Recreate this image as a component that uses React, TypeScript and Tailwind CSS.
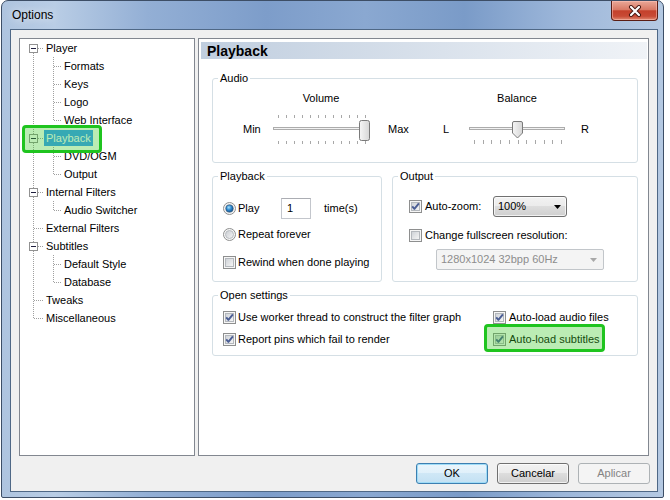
import React from "react";

type TreeItem = {
  label: string;
  level: 0 | 1;
  box?: boolean;
  last?: boolean;
  selected?: boolean;
};

const TREE: TreeItem[] = [
  { label: "Player", level: 0, box: true },
  { label: "Formats", level: 1 },
  { label: "Keys", level: 1 },
  { label: "Logo", level: 1 },
  { label: "Web Interface", level: 1, last: true },
  { label: "Playback", level: 0, box: true, selected: true },
  { label: "DVD/OGM", level: 1 },
  { label: "Output", level: 1, last: true },
  { label: "Internal Filters", level: 0, box: true },
  { label: "Audio Switcher", level: 1, last: true },
  { label: "External Filters", level: 0 },
  { label: "Subtitles", level: 0, box: true },
  { label: "Default Style", level: 1 },
  { label: "Database", level: 1, last: true },
  { label: "Tweaks", level: 0 },
  { label: "Miscellaneous", level: 0 },
];

const dot = {
  stroke: "#a0a0a0",
  strokeWidth: 1,
  strokeDasharray: "1 1",
  shapeRendering: "crispEdges" as const,
};

function TreeLines({ item, index }: { item: TreeItem; index: number }) {
  const first = index === 0;
  const lastTop = index === TREE.length - 1;
  if (item.level === 1) {
    return (
      <svg width="42" height="18" className="shrink-0">
        <line x1="13.5" y1="0" x2="13.5" y2="18" {...dot} />
        <line x1="33.5" y1="0" x2="33.5" y2={item.last ? 10 : 18} {...dot} />
        <line x1="34" y1="9.5" x2="42" y2="9.5" {...dot} />
      </svg>
    );
  }
  return (
    <svg width="24" height="18" className="shrink-0">
      {item.box ? (
        <>
          {!first && <line x1="13.5" y1="0" x2="13.5" y2="5" {...dot} />}
          {!lastTop && <line x1="13.5" y1="14" x2="13.5" y2="18" {...dot} />}
          <rect x="9.5" y="5.5" width="8" height="8" fill="#fff" stroke="#919191" shapeRendering="crispEdges" />
          <line x1="11" y1="9.5" x2="16" y2="9.5" stroke="#1f1f3f" shapeRendering="crispEdges" />
          <line x1="18" y1="9.5" x2="24" y2="9.5" {...dot} />
        </>
      ) : (
        <>
          <line x1="13.5" y1="0" x2="13.5" y2={lastTop ? 10 : 18} {...dot} />
          <line x1="14" y1="9.5" x2="24" y2="9.5" {...dot} />
        </>
      )}
    </svg>
  );
}

const CheckBox = ({ checked }: { checked?: boolean }) => (
  <svg width="13" height="13" className="shrink-0">
    <defs>
      <linearGradient id="cbIn" x1="0" y1="0" x2="1" y2="1">
        <stop offset="0" stopColor="#cdd1d6" />
        <stop offset="1" stopColor="#f7f7f7" />
      </linearGradient>
    </defs>
    <rect x="0.5" y="0.5" width="12" height="12" fill="#f6f6f6" stroke="#8e8f8f" shapeRendering="crispEdges" />
    <rect x="2.5" y="2.5" width="8" height="8" fill="url(#cbIn)" stroke="#b4b8bd" shapeRendering="crispEdges" />
    {checked && (
      <path d="M3.2 6.4 L5.4 8.9 L9.9 3.3" fill="none" stroke="#4a5d94" strokeWidth="1.9" strokeLinejoin="round" />
    )}
  </svg>
);

const Radio = ({ checked }: { checked?: boolean }) => (
  <svg width="13" height="13" className="shrink-0">
    <defs>
      <linearGradient id="rbIn" x1="0" y1="0" x2="1" y2="1">
        <stop offset="0" stopColor="#c9cdd2" />
        <stop offset="1" stopColor="#f5f5f5" />
      </linearGradient>
      <radialGradient id="rbDot" cx="0.4" cy="0.35" r="0.7">
        <stop offset="0" stopColor="#a6e0fb" />
        <stop offset="0.5" stopColor="#2f8ad0" />
        <stop offset="1" stopColor="#124f8c" />
      </radialGradient>
    </defs>
    <circle cx="6.5" cy="6.5" r="6" fill="#f6f6f6" stroke="#8e8f8f" />
    <circle cx="6.5" cy="6.5" r="4" fill="url(#rbIn)" stroke="#b8bcc1" />
    {checked && <circle cx="6.5" cy="6.5" r="3.6" fill="url(#rbDot)" stroke="#1a4f80" strokeWidth="0.6" />}
  </svg>
);

const Arrow = ({ color = "#000" }: { color?: string }) => (
  <svg width="7" height="4" className="shrink-0">
    <path d="M0 0 H7 L3.5 4 Z" fill={color} />
  </svg>
);

function VolumeSlider() {
  const ticks = Array.from({ length: 12 }, (_, i) => Math.round(7 + (i * 87) / 11));
  return (
    <svg width="100" height="32" className="shrink-0">
      <defs>
        <linearGradient id="vThumb" x1="0" y1="0" x2="1" y2="0">
          <stop offset="0" stopColor="#f6f6f6" />
          <stop offset="1" stopColor="#d6d6d6" />
        </linearGradient>
      </defs>
      {ticks.map((x) => (
        <g key={x}>
          <line x1={x + 0.5} y1="2" x2={x + 0.5} y2="5" stroke="#a8a8a8" shapeRendering="crispEdges" />
          <line x1={x + 0.5} y1="28" x2={x + 0.5} y2="31" stroke="#a8a8a8" shapeRendering="crispEdges" />
        </g>
      ))}
      <rect x="2.5" y="14.5" width="94" height="2" fill="#f2f2f2" stroke="#acacac" shapeRendering="crispEdges" />
      <rect x="88.5" y="7.5" width="10" height="20" rx="2" fill="url(#vThumb)" stroke="#7a7a7a" />
    </svg>
  );
}

function BalanceSlider() {
  const ticks = Array.from({ length: 11 }, (_, i) => Math.round(7 + i * 8.7));
  return (
    <svg width="100" height="32" className="shrink-0">
      <defs>
        <linearGradient id="bThumb" x1="0" y1="0" x2="1" y2="0">
          <stop offset="0" stopColor="#f6f6f6" />
          <stop offset="1" stopColor="#d6d6d6" />
        </linearGradient>
      </defs>
      {ticks.map((x) => (
        <line key={x} x1={x + 0.5} y1="27" x2={x + 0.5} y2="31" stroke="#a8a8a8" shapeRendering="crispEdges" />
      ))}
      <rect x="2.5" y="14.5" width="95" height="2" fill="#f2f2f2" stroke="#acacac" shapeRendering="crispEdges" />
      <path d="M45.5 10 Q45.5 8.5 47 8.5 H54 Q55.5 8.5 55.5 10 V20 L50.5 25 L45.5 20 Z" fill="url(#bThumb)" stroke="#7a7a7a" />
    </svg>
  );
}

const Group = ({ title, className, children }: { title: string; className: string; children: React.ReactNode }) => (
  <fieldset className={`min-w-0 rounded-[3px] border border-[#d5dfe5] ${className}`}>
    <legend className="ml-[5px] px-[2px] text-[11px] leading-[14px]">{title}</legend>
    {children}
  </fieldset>
);

const greenBox = "absolute rounded-[4px] border-[3px] border-[#1fc41f] bg-[rgba(60,200,40,0.35)]";

export default function App() {
  return (
    <div className="h-[500px] w-[670px] bg-white pl-[1px] font-['Liberation_Sans',Arial,sans-serif] text-[11px] text-black">
      <div className="relative flex h-[498px] w-[663px] flex-col rounded-t-[7px] rounded-b-[2px] border border-[#3d4e66] bg-[linear-gradient(90deg,#aec4df_0%,#b9cde5_8%,#93afd5_22%,#7d9dca_40%,#8aa8d1_55%,#7a9bc8_70%,#9db7da_85%,#b5c9e2_100%)] pl-[8px] pr-[5px] pb-[5px]">
        {/* title bar */}
        <div className="flex h-[28px] items-center pl-[2px] text-[12px] [text-shadow:0_0_8px_rgba(255,255,255,0.95)]">
          Options
        </div>
        <div className="absolute right-[5px] top-0 flex h-[20px] w-[47px] items-center justify-center rounded-b-[4px] border border-t-0 border-[#5a1d14] bg-[linear-gradient(180deg,#e9a898_0%,#d97a66_45%,#c4412c_52%,#c84a35_80%,#e08a72_100%)] shadow-[inset_0_0_0_1px_rgba(255,200,190,0.5)]">
          <svg width="14" height="12">
            <path d="M3 2 L11 10 M11 2 L3 10" stroke="#45150f" strokeWidth="4" strokeLinecap="round" />
            <path d="M3 2 L11 10 M11 2 L3 10" stroke="#fff" strokeWidth="2.2" strokeLinecap="round" />
          </svg>
        </div>

        {/* client area */}
        <div className="flex h-[463px] flex-col border border-[#4f6886] bg-[#f0f0f0] px-[8px] pt-[8px]">
          <div className="flex h-[418px] gap-[3px]">
            {/* tree */}
            <div className="relative h-[418px] w-[176px] shrink-0 border border-[#828790] bg-white">
              {TREE.map((item, i) => (
                <div key={item.label} className="flex h-[18px] items-center">
                  <TreeLines item={item} index={i} />
                  <span
                    className={`h-[16px] whitespace-nowrap px-[2px] leading-[16px] ${
                      item.selected ? "bg-[#3399ff] text-white" : ""
                    }`}
                  >
                    {item.label}
                  </span>
                </div>
              ))}
              <div className={`${greenBox} left-[2px] top-[86px] h-[28px] w-[80px]`} />
            </div>

            {/* page */}
            <div className="flex h-[418px] w-[451px] flex-col border border-[#828790] bg-white">
              <div className="ml-[2px] mr-[1px] mt-[3px] flex h-[17px] items-center bg-[linear-gradient(90deg,#c0cedf,#f0f3f7)] pl-[6px] text-[14px] font-bold leading-none">
                Playback
              </div>
              <div className="ml-[13px] mr-[10px] flex flex-col">
                <Group title="Audio" className="mt-[12px] h-[92px]">
                  <div className="flex pt-[6px]">
                    <div className="ml-[30px] flex w-[200px] flex-col">
                      <div className="ml-[28px] w-[100px] text-center leading-[14px]">Volume</div>
                      <div className="mt-[8px] flex h-[32px] items-center">
                        <span className="w-[28px]">Min</span>
                        <VolumeSlider />
                        <span className="ml-[17px]">Max</span>
                      </div>
                    </div>
                    <div className="flex flex-col">
                      <div className="ml-[24px] w-[100px] text-center leading-[14px]">Balance</div>
                      <div className="mt-[8px] flex h-[32px] items-center">
                        <span className="w-[24px]">L</span>
                        <BalanceSlider />
                        <span className="ml-[14px]">R</span>
                      </div>
                    </div>
                  </div>
                </Group>

                <div className="mt-[6px] flex gap-[10px]">
                  <Group title="Playback" className="h-[113px] w-[170px]">
                    <div className="ml-[10px] mt-[15px] flex h-[21px] items-center">
                      <Radio checked />
                      <span className="ml-[2px] w-[43px]">Play</span>
                      <div className="flex h-[21px] w-[30px] items-center border border-[#c3c6cc] border-t-[#abadb3] bg-white pl-[5px]">
                        1
                      </div>
                      <span className="ml-[13px]">time(s)</span>
                    </div>
                    <div className="ml-[10px] mt-[5px] flex h-[20px] items-center">
                      <Radio />
                      <span className="ml-[2px]">Repeat forever</span>
                    </div>
                    <div className="ml-[10px] mt-[8px] flex h-[20px] items-center">
                      <CheckBox />
                      <span className="ml-[2px]">Rewind when done playing</span>
                    </div>
                  </Group>

                  <Group title="Output" className="h-[113px] w-[246px]">
                    <div className="ml-[16px] mt-[13px] flex h-[21px] items-center">
                      <CheckBox checked />
                      <span className="ml-[3px] w-[68px]">Auto-zoom:</span>
                      <div className="flex h-[21px] w-[74px] items-center justify-between rounded-[3px] border border-[#707070] bg-[linear-gradient(180deg,#f2f2f2_0%,#ebebeb_49%,#dddddd_50%,#cfcfcf_100%)] pl-[4px] pr-[5px] shadow-[inset_0_0_0_1px_rgba(255,255,255,0.7)]">
                        <span>100%</span>
                        <Arrow />
                      </div>
                    </div>
                    <div className="ml-[16px] mt-[8px] flex h-[20px] items-center">
                      <CheckBox />
                      <span className="ml-[3px]">Change fullscreen resolution:</span>
                    </div>
                    <div className="ml-[43px] mt-[4px] flex h-[21px] w-[168px] items-center justify-between rounded-[2px] border border-[#c2c6ca] bg-[#f4f4f4] pl-[4px] pr-[6px] text-[#8d8d8d]">
                      <span>1280x1024 32bpp 60Hz</span>
                      <Arrow color="#a8a8a8" />
                    </div>
                  </Group>
                </div>

                <Group title="Open settings" className="mt-[6px] h-[68px]">
                  <div className="ml-[10px] mt-[5px] grid grid-cols-[270px_1fr] gap-y-[2px]">
                    <div className="flex h-[20px] items-center">
                      <CheckBox checked />
                      <span className="ml-[2px]">Use worker thread to construct the filter graph</span>
                    </div>
                    <div className="flex h-[20px] items-center">
                      <CheckBox checked />
                      <span className="ml-[3px]">Auto-load audio files</span>
                    </div>
                    <div className="flex h-[20px] items-center">
                      <CheckBox checked />
                      <span className="ml-[2px]">Report pins which fail to render</span>
                    </div>
                    <div className="relative flex h-[20px] items-center">
                      <CheckBox checked />
                      <span className="ml-[3px]">Auto-load subtitles</span>
                      <div className={`${greenBox} left-[-9px] top-[-5px] h-[28px] w-[121px]`} />
                    </div>
                  </div>
                </Group>
              </div>
            </div>
          </div>

          {/* buttons */}
          <div className="mr-[-1px] mt-[7px] flex justify-end gap-[9px]">
            <button className="flex h-[21px] w-[72px] items-center justify-center rounded-[3px] border border-[#3c7fb1] bg-[linear-gradient(180deg,#e9f5fc_0%,#e0f0fa_49%,#cfe7f6_50%,#c3e1f3_100%)] shadow-[inset_0_0_0_1px_#9fdcf7]">
              OK
            </button>
            <button className="flex h-[21px] w-[72px] items-center justify-center rounded-[3px] border border-[#707070] bg-[linear-gradient(180deg,#f2f2f2_0%,#ebebeb_49%,#dddddd_50%,#cfcfcf_100%)] shadow-[inset_0_0_0_1px_rgba(255,255,255,0.7)]">
              Cancelar
            </button>
            <button className="flex h-[21px] w-[72px] items-center justify-center rounded-[3px] border border-[#adb2b5] bg-[#f4f4f4] text-[#838383]">
              Aplicar
            </button>
          </div>
        </div>
      </div>
    </div>
  );
}
